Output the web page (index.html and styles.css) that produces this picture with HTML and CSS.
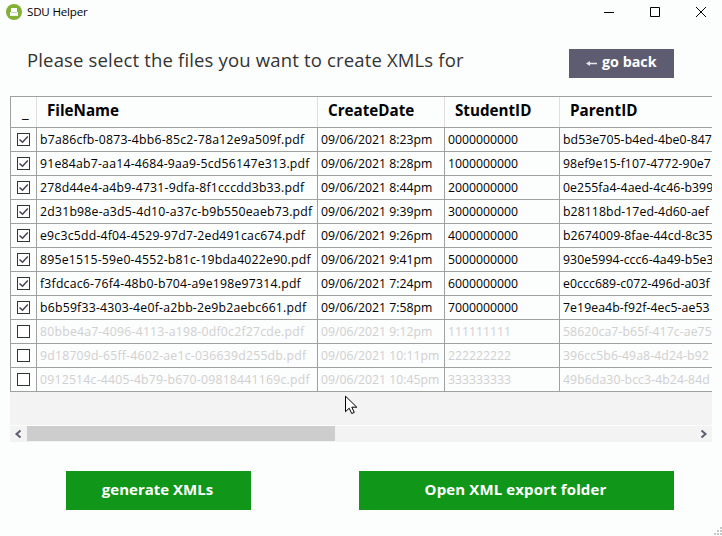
FILE: index.html
```html
<!DOCTYPE html>
<html lang="en">
<head>
<meta charset="utf-8">
<title>SDU Helper</title>
<link rel="stylesheet" href="styles.css">
</head>
<body>
<div class="window">
  <header class="titlebar">
    <svg class="logo" width="16" height="16" viewBox="0 0 16 16"><circle cx="8" cy="8" r="8" fill="#82b135"/><path d="M5 4h6v4h1v4H4V8h1z" fill="#fff"/><path d="M5 8h6v1H5z" fill="#c5cbc0"/><path d="M4 11.5h8v.5H4z" fill="#dce5d0"/></svg>
    <span class="app-name">SDU Helper</span>
    <div class="controls">
      <svg width="10" height="10" viewBox="0 0 10 10"><path d="M0 5.500h10"/></svg>
      <svg width="10" height="10" viewBox="0 0 10 10"><path d="M.5.5h9v9h-9z"/></svg>
      <svg width="10" height="10" viewBox="0 0 10 10"><path d="M0 0l10 10M10 0L0 10"/></svg>
    </div>
  </header>
  <div class="heading">
    <h1>Please select the files you want to create XMLs for</h1>
    <button class="back"><svg width="11" height="7" viewBox="0 0 11 7"><path d="M0 3.5L4 1v1.8h7v1.4H4V6z" fill="#e6e5ea"/></svg><span>go back</span></button>
  </div>
  <main class="grid">
    <div class="row head"><div class="mark">_</div><div>FileName</div><div>CreateDate</div><div>StudentID</div><div>ParentID</div></div>
    <div class="row"><div><svg class="box" viewBox="0 0 13 13"><path id="tick" d="M2.500 6.500L5.500 9.300 10.800 3.500"/></svg></div><div class="file">b7a86cfb-0873-4bb6-85c2-78a12e9a509f.pdf</div><div>09/06/2021 8:23pm</div><div>0000000000</div><div>bd53e705-b4ed-4be0-847</div></div>
    <div class="row"><div><svg class="box" viewBox="0 0 13 13"><use href="#tick"/></svg></div><div class="file">91e84ab7-aa14-4684-9aa9-5cd56147e313.pdf</div><div>09/06/2021 8:28pm</div><div>1000000000</div><div>98ef9e15-f107-4772-90e7</div></div>
    <div class="row"><div><svg class="box" viewBox="0 0 13 13"><use href="#tick"/></svg></div><div class="file">278d44e4-a4b9-4731-9dfa-8f1cccdd3b33.pdf</div><div>09/06/2021 8:44pm</div><div>2000000000</div><div>0e255fa4-4aed-4c46-b399</div></div>
    <div class="row"><div><svg class="box" viewBox="0 0 13 13"><use href="#tick"/></svg></div><div class="file">2d31b98e-a3d5-4d10-a37c-b9b550eaeb73.pdf</div><div>09/06/2021 9:39pm</div><div>3000000000</div><div>b28118bd-17ed-4d60-aef</div></div>
    <div class="row"><div><svg class="box" viewBox="0 0 13 13"><use href="#tick"/></svg></div><div class="file">e9c3c5dd-4f04-4529-97d7-2ed491cac674.pdf</div><div>09/06/2021 9:26pm</div><div>4000000000</div><div>b2674009-8fae-44cd-8c35</div></div>
    <div class="row"><div><svg class="box" viewBox="0 0 13 13"><use href="#tick"/></svg></div><div class="file">895e1515-59e0-4552-b81c-19bda4022e90.pdf</div><div>09/06/2021 9:41pm</div><div>5000000000</div><div>930e5994-ccc6-4a49-b5e3</div></div>
    <div class="row"><div><svg class="box" viewBox="0 0 13 13"><use href="#tick"/></svg></div><div class="file">f3fdcac6-76f4-48b0-b704-a9e198e97314.pdf</div><div>09/06/2021 7:24pm</div><div>6000000000</div><div>e0ccc689-c072-496d-a03f</div></div>
    <div class="row"><div><svg class="box" viewBox="0 0 13 13"><use href="#tick"/></svg></div><div class="file">b6b59f33-4303-4e0f-a2bb-2e9b2aebc661.pdf</div><div>09/06/2021 7:58pm</div><div>7000000000</div><div>7e19ea4b-f92f-4ec5-ae53</div></div>
    <div class="row off"><div><svg class="box" viewBox="0 0 13 13"></svg></div><div class="file">80bbe4a7-4096-4113-a198-0df0c2f27cde.pdf</div><div>09/06/2021 9:12pm</div><div>111111111</div><div>58620ca7-b65f-417c-ae75</div></div>
    <div class="row off"><div><svg class="box" viewBox="0 0 13 13"></svg></div><div class="file">9d18709d-65ff-4602-ae1c-036639d255db.pdf</div><div>09/06/2021 10:11pm</div><div>222222222</div><div>396cc5b6-49a8-4d24-b92</div></div>
    <div class="row off"><div><svg class="box" viewBox="0 0 13 13"></svg></div><div class="file">0912514c-4405-4b79-b670-09818441169c.pdf</div><div>09/06/2021 10:45pm</div><div>333333333</div><div>49b6da30-bcc3-4b24-84d</div></div>
  </main>
  <div class="scrollbar">
    <svg width="17" height="16" viewBox="0 0 17 16"><path d="M10.5 4.5L6.5 8l4 3.5"/></svg>
    <div class="thumb"></div>
    <svg class="next" width="17" height="16" viewBox="0 0 17 16"><path d="M6.500 4.500l4 3.500-4 3.500"/></svg>
  </div>
  <footer class="actions">
    <button class="generate">generate XMLs</button>
    <button class="export">Open XML export folder</button>
  </footer>
  <svg class="cursor" width="13" height="20" viewBox="0 0 13 20"><path d="M.5 1.200v15.500l3.700-3.500 2.500 5.300 2.600-1.100-2.500-5.200h5z" fill="#fff" stroke="#000"/></svg>
  <svg class="grip" width="8" height="8" viewBox="0 0 8 8"><path d="M6 0h2v2H6zM3 3h2v2H3zM6 3h2v2H6zM0 6h2v2H0zM3 6h2v2H3zM6 6h2v2H6z" fill="#c6c6c6"/></svg>
</div>
</body>
</html>
```
FILE: styles.css
```css
* { box-sizing: border-box; }
body { margin: 0; font-family: "Open Sans", "Noto Sans", sans-serif; color: #000; background: #fcfdfd; }
button { border: 0; padding: 0; border-radius: 0; font: 700 15px/20px "Open Sans", sans-serif; color: #fff; }
.window { position: relative; width: 722px; height: 536px; overflow: hidden; background: #fcfdfd; }
.titlebar { display: flex; align-items: center; height: 23px; padding: 0 16px 0 6px; }
.logo { flex: none; }
.app-name { margin-left: 5px; font-size: 11.6px; letter-spacing: -0.2px; white-space: nowrap; }
.controls { display: flex; gap: 36px; margin-left: auto; }
.controls svg { fill: none; stroke: #000; stroke-width: 1; }
.heading { display: flex; justify-content: space-between; height: 73px; padding: 26px 48px 0 27px; }
h1 { margin: -3px 0 0; font-size: 18.5px; letter-spacing: 0.16px; line-height: 28px; font-weight: 400; color: #333; white-space: nowrap; }
.back { display: flex; align-items: center; width: 105px; height: 29px; padding-left: 17px; gap: 5px; background: #5e5c70; font-size: 14.3px; }
.back span { margin-top: -4px; }
.grid { width: 702px; height: 329px; margin-left: 10px; overflow: hidden; background: #f3f3f3; border-top: 1px solid #a0a0a0; }
.row { display: grid; grid-template-columns: 27px 281px 127px 115px 152px; height: 24px; border-bottom: 1px solid #a0a0a0; background: #fcfdfd; font-size: 12.25px; line-height: 23px; }
.row > div { padding-left: 3px; border-right: 1px solid #a0a0a0; overflow: hidden; white-space: nowrap; }
.row > .file { letter-spacing: 0.22px; }
.row > div:first-child { display: flex; align-items: center; padding-left: 6px; border-left: 1px solid #a0a0a0; }
.row > div:last-child { border-right: 0; letter-spacing: 0.09px; }
.off { color: #d0d0d0; }
.head { height: 31px; font-weight: 700; font-size: 15.2px; line-height: 27px; }
.head > div { padding-left: 10px; border-right-color: #e3dcdc; }
.head > div:first-child { padding-left: 11px; }
.head > div:last-child { letter-spacing: 0; }
.head .mark { font-weight: 400; }
.box { flex: none; width: 13px; height: 13px; outline: 1px solid #333; outline-offset: -1px; background: #fff; fill: none; stroke: #454152; stroke-width: 1.5; }
.scrollbar { display: flex; width: 702px; height: 17px; margin-left: 10px; border-top: 1px solid #fcfdfd; background: #f3f3f3; }
.scrollbar svg { fill: none; stroke: #5e5c70; stroke-width: 2; }
.thumb { width: 308px; height: 15px; background: #cdcdcd; }
.next { margin-left: auto; }
.actions { display: flex; gap: 108px; padding: 29px 48px 0 66px; }
.actions button { height: 39px; padding-bottom: 3px; background: #109618; }
.generate { width: 185px; padding-right: 2px; }
.export { width: 315px; padding-right: 2px; letter-spacing: 0.13px; }
.cursor { position: absolute; left: 345px; top: 395px; }
.grip { position: absolute; right: 0; bottom: 1px; }
```
